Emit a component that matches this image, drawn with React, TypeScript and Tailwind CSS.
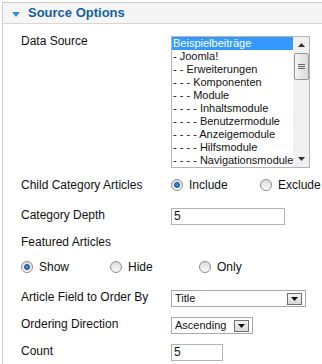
import React from 'react';

const CATEGORIES = [
  'Beispielbeiträge',
  '- Joomla!',
  '- - Erweiterungen',
  '- - - Komponenten',
  '- - - Module',
  '- - - - Inhaltsmodule',
  '- - - - Benutzermodule',
  '- - - - Anzeigemodule',
  '- - - - Hilfsmodule',
  '- - - - Navigationsmodule',
];

/** Windows-style radio button with its caption. */
function Radio({ label, checked }: { label: string; checked?: boolean }) {
  return (
    <div className="flex w-[89px] shrink-0 items-center">
      <span className="grid h-[12px] w-[12px] shrink-0 place-items-center rounded-full border border-[#8c8c8c] bg-gradient-to-b from-[#dcdcdc] to-[#fafafa]">
        {checked && (
          <span className="h-[6px] w-[6px] rounded-full border border-[#1b4f86] bg-[#3b84cf]" />
        )}
      </span>
      <span className="ml-[6px] whitespace-nowrap leading-[14px]">{label}</span>
    </div>
  );
}

function DropArrow() {
  return (
    <span className="grid h-[12px] w-[15px] shrink-0 place-items-center border border-[#6f6f6f] bg-gradient-to-b from-[#f2f2f2] to-[#d8d8d8]">
      <svg width="7" height="4" viewBox="0 0 7 4">
        <path d="M0 0h7L3.5 4z" fill="#111" />
      </svg>
    </span>
  );
}

function Select({ value, width }: { value: string; width: string }) {
  return (
    <div className={'flex h-[17px] items-center border border-[#a9a9a9] bg-white pr-[3px] ' + width}>
      <span className="flex-1 pl-[3px] text-[11px] leading-[15px]">{value}</span>
      <DropArrow />
    </div>
  );
}

function TextInput({ value, width }: { value: string; width: string }) {
  return (
    <div className={'h-[17px] border border-[#b4b4b4] bg-white pl-[2px] text-[12px] leading-[15px] ' + width}>
      {value}
    </div>
  );
}

function ListBox() {
  return (
    <div className="flex h-[132px] w-[139px] border border-[#b5b5b5] bg-white">
      <div className="flex-1 overflow-hidden">
        {CATEGORIES.map((c, i) => (
          <div
            key={c}
            className={
              'h-[13px] whitespace-nowrap pl-[1px] text-[11px] leading-[13px] ' +
              (i === 0 ? 'bg-[#3399ff] text-white' : 'text-[#111]')
            }
          >
            {c}
          </div>
        ))}
      </div>
      {/* scrollbar */}
      <div className="flex w-[16px] shrink-0 flex-col items-center bg-[#f0f0f0]">
        <div className="grid h-[16px] w-full place-items-center">
          <svg width="7" height="4" viewBox="0 0 7 4">
            <path d="M3.5 0L7 4H0z" fill="#333" />
          </svg>
        </div>
        <div className="grid h-[27px] w-[15px] place-items-center rounded-[2px] border border-[#979797] bg-gradient-to-r from-[#f4f4f4] to-[#dcdcdc]">
          <svg width="7" height="7" viewBox="0 0 7 7">
            <path d="M0 1.5h7M0 3.5h7M0 5.5h7" stroke="#666" strokeWidth="1" />
          </svg>
        </div>
        <div className="flex-1" />
        <div className="grid h-[16px] w-full place-items-center">
          <svg width="7" height="4" viewBox="0 0 7 4">
            <path d="M0 0h7L3.5 4z" fill="#333" />
          </svg>
        </div>
      </div>
    </div>
  );
}

export default function App() {
  return (
    <div className="h-[364px] w-[322px] overflow-hidden bg-white font-['Liberation_Sans',Arial,sans-serif] text-[12px] text-[#111]">
      <div className="ml-[2px] mt-[2px] w-[420px] border-l border-t border-[#cccccc]">
        {/* Panel header */}
        <div className="flex h-[21px] items-center border-b border-[#d6d6d6] bg-[#f5f5f5] pl-[9px]">
          <svg width="8" height="5" viewBox="0 0 8 5" className="mt-[2px]">
            <path d="M0 0h8L4 5z" fill="#3a8fd3" />
          </svg>
          <span className="ml-[8px] text-[13px] font-bold leading-[16px] text-[#17609e]">Source Options</span>
        </div>

        <div className="pb-[10px] pl-[18px] pt-[12px]">
          <div className="flex items-start">
            <label className="-mt-[2px] w-[150px] shrink-0 leading-[14px]">Data Source</label>
            <ListBox />
          </div>

          <div className="mt-[10px] flex h-[14px] items-center">
            <label className="w-[150px] shrink-0 leading-[14px]">Child Category Articles</label>
            <Radio label="Include" checked />
            <Radio label="Exclude" />
          </div>

          <div className="mt-[16px] flex items-start">
            <label className="w-[150px] shrink-0 leading-[14px]">Category Depth</label>
            <TextInput value="5" width="w-[114px]" />
          </div>

          <div className="mt-[10px] leading-[14px]">Featured Articles</div>

          <div className="mt-[11px] flex h-[14px] items-center">
            <Radio label="Show" checked />
            <Radio label="Hide" />
            <Radio label="Only" />
          </div>

          <div className="mt-[16px] flex items-start">
            <label className="w-[150px] shrink-0 leading-[14px]">Article Field to Order By</label>
            <Select value="Title" width="w-[135px]" />
          </div>

          <div className="mt-[10px] flex items-start">
            <label className="w-[150px] shrink-0 leading-[14px]">Ordering Direction</label>
            <Select value="Ascending" width="w-[82px]" />
          </div>

          <div className="mt-[10px] flex items-start">
            <label className="w-[150px] shrink-0 leading-[14px]">Count</label>
            <TextInput value="5" width="w-[52px]" />
          </div>
        </div>
      </div>
    </div>
  );
}
